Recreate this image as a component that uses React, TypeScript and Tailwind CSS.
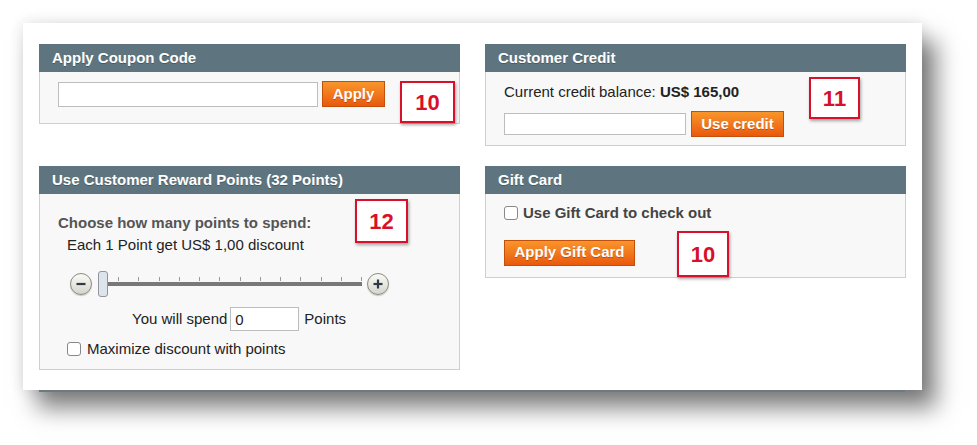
import React from "react";

const font = { fontFamily: '"Liberation Sans", Arial, Helvetica, sans-serif' };

function Badge({ n, className }: { n: string; className: string }) {
  return (
    <div
      className={[
        "absolute flex items-center justify-center border-2 border-[#d8102a] bg-white text-[22px] font-bold text-[#d8102a] shadow-[1px_2px_3px_rgba(0,0,0,0.35)]",
        className,
      ].join(" ")}
    >
      {n}
    </div>
  );
}

function Panel({
  title,
  children,
  bodyClass,
}: {
  title: string;
  children: React.ReactNode;
  bodyClass: string;
}) {
  return (
    <div className="relative flex flex-col">
      <div className="flex h-[28px] items-center bg-[#5e757f] pl-[13px] text-[15px] font-bold text-white [text-shadow:0_1px_0_rgba(0,0,0,0.25)]">
        {title}
      </div>
      <div className={["border border-t-0 border-[#cfcfcf] bg-[#f8f8f8]", bodyClass].join(" ")}>
        {children}
      </div>
    </div>
  );
}

function OrangeButton({ label, className }: { label: string; className: string }) {
  return (
    <button
      type="button"
      className={[
        "border border-[#c2500a] bg-gradient-to-b from-[#f8952a] to-[#e9580c] text-[15px] font-bold text-white [text-shadow:0_1px_0_rgba(0,0,0,0.25)]",
        className,
      ].join(" ")}
    >
      {label}
    </button>
  );
}

function RoundIcon({ sign }: { sign: "-" | "+" }) {
  return (
    <div className="flex h-[22px] w-[22px] items-center justify-center rounded-full border border-[#8a8a80] bg-gradient-to-b from-[#fbfbf6] to-[#d6d5cc] shadow-[0_1px_1px_rgba(0,0,0,0.2)]">
      <svg width="12" height="12" viewBox="0 0 12 12">
        <path d="M1.5 6h9" stroke="#2e3a44" strokeWidth="2.2" />
        {sign === "+" && <path d="M6 1.5v9" stroke="#2e3a44" strokeWidth="2.2" />}
      </svg>
    </div>
  );
}

function Slider() {
  return (
    <div className="ml-[30px] flex h-[26px] items-center">
      <RoundIcon sign="-" />
      <div className="relative ml-[6px] flex h-[26px] w-[264px] items-center">
        <div className="h-[26px] w-[10px] rounded-[3px] border border-[#8f969c] bg-[#dde4ec]" />
        <div className="flex h-[26px] flex-1 flex-col">
          <div className="flex h-[10px] items-end justify-between pl-[10px]">
            {Array.from({ length: 13 }).map((_, i) => (
              <div key={i} className="h-[4px] w-px bg-[#999]" />
            ))}
          </div>
          <div className="mt-[1px] h-[4px] bg-[#787878]" />
        </div>
      </div>
      <div className="ml-[5px]">
        <RoundIcon sign="+" />
      </div>
    </div>
  );
}

export default function App() {
  return (
    <div className="h-[445px] w-[977px] overflow-hidden bg-white pl-[23px] pt-[23px]" style={font}>
      <div className="h-[367px] w-[899px] bg-white pl-[16px] pt-[21px] shadow-[0_0_14px_rgba(0,0,0,0.12),14px_18px_22px_rgba(0,0,0,0.5)]">
        <div className="grid w-[867px] grid-cols-[421px_421px] gap-x-[25px] gap-y-[20px]">
          {/* coupon */}
          <div className="relative self-start">
            <Panel title="Apply Coupon Code" bodyClass="h-[52px] pl-[18px] pt-[9px]">
              <div className="flex items-center">
                <input className="h-[25px] w-[260px] border border-[#bdbdbd] bg-white" />
                <OrangeButton label="Apply" className="ml-[4px] h-[26px] w-[63px]" />
              </div>
            </Panel>
            <Badge n="10" className="left-[361px] top-[37px] h-[42px] w-[55px]" />
          </div>

          {/* credit */}
          <div className="relative">
            <Panel title="Customer Credit" bodyClass="h-[74px] pl-[18px] pt-[11px]">
              <div className="text-[15px] leading-[18px] text-[#222]">
                Current credit balance: <span className="font-bold">US$ 165,00</span>
              </div>
              <div className="mt-[10px] flex items-center">
                <input className="h-[22px] w-[182px] border border-[#bdbdbd] bg-white" />
                <OrangeButton label="Use credit" className="ml-[5px] h-[26px] w-[93px]" />
              </div>
            </Panel>
            <Badge n="11" className="left-[324px] top-[33px] h-[42px] w-[51px]" />
          </div>

          {/* reward points */}
          <div className="relative">
            <Panel
              title="Use Customer Reward Points (32 Points)"
              bodyClass="h-[176px] pl-[18px] pt-[20px]"
            >
              <div className="text-[15px] font-bold leading-[18px] text-[#555]">
                Choose how many points to spend:
              </div>
              <div className="ml-[9px] mt-[4px] text-[15px] leading-[18px] text-[#222]">
                Each 1 Point get US$ 1,00 discount
              </div>
              <div className="mt-[17px] -ml-[18px]">
                <Slider />
              </div>
              <div className="mt-[10px] flex items-center pl-[74px] text-[15px] text-[#222]">
                <span>You will spend</span>
                <input
                  defaultValue="0"
                  className="ml-[3px] h-[24px] w-[69px] border border-[#bdbdbd] bg-white pl-[4px] text-[15px]"
                />
                <span className="ml-[5px]">Points</span>
              </div>
              <div className="mt-[7px] ml-[9px] flex items-center text-[15px] text-[#222]">
                <span className="h-[14px] w-[14px] rounded-[3px] border border-[#888] bg-white" />
                <span className="ml-[6px]">Maximize discount with points</span>
              </div>
            </Panel>
            <Badge n="12" className="left-[316px] top-[33px] h-[44px] w-[53px]" />
          </div>

          {/* gift card */}
          <div className="relative self-start">
            <Panel title="Gift Card" bodyClass="h-[84px] pl-[18px] pt-[8px]">
              <div className="flex items-center text-[15px] font-bold text-[#444]">
                <span className="h-[14px] w-[14px] rounded-[3px] border border-[#888] bg-white" />
                <span className="ml-[5px]">Use Gift Card to check out</span>
              </div>
              <OrangeButton label="Apply Gift Card" className="mt-[15px] h-[26px] w-[131px]" />
            </Panel>
            <Badge n="10" className="left-[192px] top-[65px] h-[46px] w-[52px]" />
          </div>
        </div>
        <div className="mt-[20px] h-[2px] w-[866px] bg-[#6d7a80]" />
      </div>
    </div>
  );
}
